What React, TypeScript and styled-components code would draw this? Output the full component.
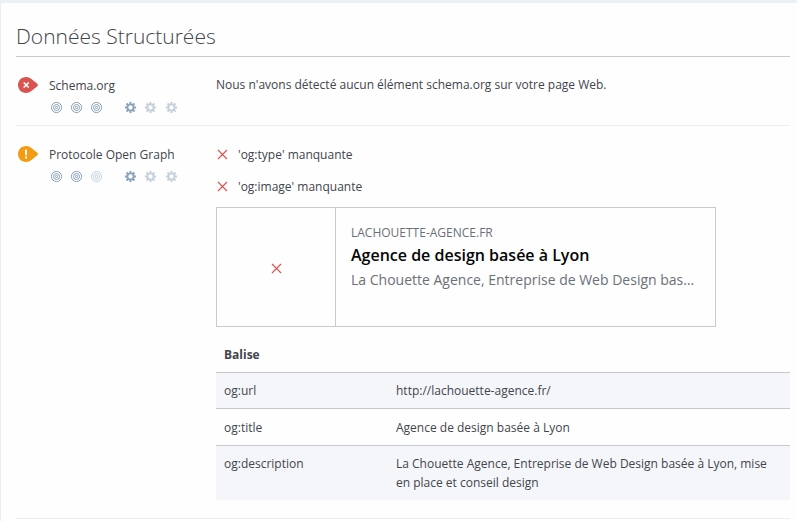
import React from "react";
import styled, { createGlobalStyle } from "styled-components";

const GlobalStyle = createGlobalStyle`
  * { box-sizing: border-box; }
  body {
    margin: 0;
    background: #fefefe;
    color: #41454c;
    font: 12px/19px "Open Sans", "Noto Sans", sans-serif;
  }
`;

const Panel = styled.main`
  width: 797px;
  height: 521px;
  padding: 0 7px 0 15px;
  overflow: hidden;
  border-top: 3px solid #eceff4;
  border-left: 1px solid #ededf0;
`;

const Title = styled.h2`
  height: 54px;
  margin: 0;
  padding-top: 17px;
  border-bottom: 1px solid #c9cacc;
  color: #41454c;
  font-size: 21px;
  line-height: 32px;
  font-weight: 300;
`;

const Criterion = styled.section<{ $height: number }>`
  display: grid;
  grid-template-columns: 33px 167px 1fr;
  height: ${({ $height }) => $height}px;
  padding-top: 19px;
  border-bottom: 1px solid #ededee;
`;

const BadgeIcon = styled.svg`
  display: block;
  width: 20px;
  height: 16px;
  margin: 1px 0 0 2px;
`;

const Name = styled.h3`
  margin: 0;
  font-size: 12px;
  line-height: 19px;
  font-weight: 400;
`;

const Ratings = styled.div`
  display: flex;
  gap: 21px;
  margin: 6px 0 0 1px;
`;

const RatingGroup = styled.div<{ $gap: number }>`
  display: flex;
  gap: ${({ $gap }) => $gap}px;
`;

const RatingIcon = styled.svg<{ $active: boolean }>`
  display: block;
  width: 13px;
  height: 13px;
  color: ${({ $active }) => ($active ? "#8ba2b9" : "#c5d0db")};
`;

const Message = styled.p`
  margin: -1px 0 0;
  line-height: 19px;
`;

const Missing = styled.div`
  display: flex;
  align-items: center;
  gap: 10px;
  height: 19px;
  padding-left: 1px;
  margin-bottom: 13px;
`;

const CrossIcon = styled.svg`
  display: block;
  flex: none;
  width: 11px;
  height: 11px;
`;

const Card = styled.article`
  display: flex;
  width: 500px;
  height: 120px;
  margin-top: -2px;
  border: 1px solid #c9cccd;
`;

const Thumbnail = styled.div`
  display: flex;
  align-items: center;
  justify-content: center;
  flex: none;
  width: 119px;
  padding-top: 3px;
  border-right: 1px solid #c9cccd;
`;

const CardBody = styled.div`
  flex: 1;
  min-width: 0;
  padding: 16px 15px 0;
`;

const Domain = styled.div`
  color: #6b7078;
  font-size: 12px;
  line-height: 18px;
`;

const CardTitle = styled.div`
  margin-top: 1px;
  color: #050505;
  font-size: 16px;
  line-height: 24px;
  font-weight: 600;
`;

const CardText = styled.div`
  margin-top: 3px;
  color: #6b7078;
  font-size: 14px;
  line-height: 20px;
  white-space: nowrap;
`;

const TagTable = styled.div`
  margin-top: 9px;
`;

const TableHeader = styled.div`
  height: 36px;
  padding: 9px 8px 0;
  font-weight: 700;
`;

const TagRow = styled.div<{ $shaded?: boolean; $height: number }>`
  display: grid;
  grid-template-columns: 172px 1fr;
  height: ${({ $height }) => $height}px;
  padding: ${({ $shaded }) => ($shaded ? 8 : 9)}px 8px 0;
  border-top: 1px solid #c6c8d0;
  background: ${({ $shaded }) => ($shaded ? "#f5f6fa" : "transparent")};
`;

type Status = "error" | "warning";

const StatusBadge = ({ status }: { status: Status }) => (
  <BadgeIcon viewBox="0 0 20 16" fill="none">
    <path
      d="M8 0C3.5 0 0 3.6 0 8s3.5 8 8 8c2 0 3.900-.7 5.400-2L19 9.500c1.300-1 1.300-2 0-3L13.400 2A8 8 0 0 0 8 0Z"
      fill={status === "error" ? "#d9534f" : "#f39c12"}
    />
    {status === "error" ? (
      <path d="m5.700 5.500 5 5m0-5-5 5" stroke="#fff" strokeWidth="1.600" />
    ) : (
      <path d="M8 3.500v5.700m0 1.300v2" stroke="#fff" strokeWidth="1.900" />
    )}
  </BadgeIcon>
);

const Target = ({ active }: { active: boolean }) => (
  <RatingIcon $active={active} viewBox="0 0 13 13" fill="none" stroke="currentColor">
    <circle cx="6.500" cy="6.500" r="5.100" />
    <circle cx="6.500" cy="6.500" r="3" />
    <circle cx="6.500" cy="6.500" r="1.100" />
  </RatingIcon>
);

const Gear = ({ active }: { active: boolean }) => (
  <RatingIcon $active={active} viewBox="0 0 13 13" fill="none" stroke="currentColor">
    <circle cx="6.500" cy="6.500" r="3.100" strokeWidth="1.900" />
    {[0, 45, 90, 135, 180, 225, 270, 315].map((angle) => (
      <path
        key={angle}
        d="M6.500 .9v2"
        strokeWidth="2"
        transform={`rotate(${angle} 6.5 6.5)`}
      />
    ))}
  </RatingIcon>
);

const Cross = () => (
  <CrossIcon viewBox="0 0 11 11" fill="none">
    <path d="m1 1 9 9m0-9-9 9" stroke="#d9534f" strokeWidth="1.1" />
  </CrossIcon>
);

const Label = ({ name, targets, gears }: { name: string; targets: number; gears: number }) => (
  <div>
    <Name>{name}</Name>
    <Ratings>
      <RatingGroup $gap={7}>
        {[0, 1, 2].map((i) => <Target key={i} active={i < targets} />)}
      </RatingGroup>
      <RatingGroup $gap={7.4}>
        {[0, 1, 2].map((i) => <Gear key={i} active={i < gears} />)}
      </RatingGroup>
    </Ratings>
  </div>
);

const tags = [
  { name: "og:url", value: "http://lachouette-agence.fr/", height: 36 },
  { name: "og:title", value: "Agence de design basée à Lyon", height: 37 },
  {
    name: "og:description",
    value: "La Chouette Agence, Entreprise de Web Design basée à Lyon, mise en place et conseil design",
    height: 55,
  },
];

export default function App() {
  return (
    <>
      <GlobalStyle />
      <Panel>
        <Title>Données Structurées</Title>
        <Criterion $height={69}>
          <StatusBadge status="error" />
          <Label name="Schema.org" targets={3} gears={1} />
          <Message>Nous n'avons détecté aucun élément schema.org sur votre page Web.</Message>
        </Criterion>
        <Criterion $height={393}>
          <StatusBadge status="warning" />
          <Label name="Protocole Open Graph" targets={2} gears={1} />
          <div>
            <Missing><Cross />'og:type' manquante</Missing>
            <Missing><Cross />'og:image' manquante</Missing>
            <Card>
              <Thumbnail><Cross /></Thumbnail>
              <CardBody>
                <Domain>LACHOUETTE-AGENCE.FR</Domain>
                <CardTitle>Agence de design basée à Lyon</CardTitle>
                <CardText>La Chouette Agence, Entreprise de Web Design bas…</CardText>
              </CardBody>
            </Card>
            <TagTable>
              <TableHeader>Balise</TableHeader>
              {tags.map((tag, index) => (
                <TagRow key={tag.name} $shaded={index % 2 === 0} $height={tag.height}>
                  <span>{tag.name}</span>
                  <span>{tag.value}</span>
                </TagRow>
              ))}
            </TagTable>
          </div>
        </Criterion>
      </Panel>
    </>
  );
}
